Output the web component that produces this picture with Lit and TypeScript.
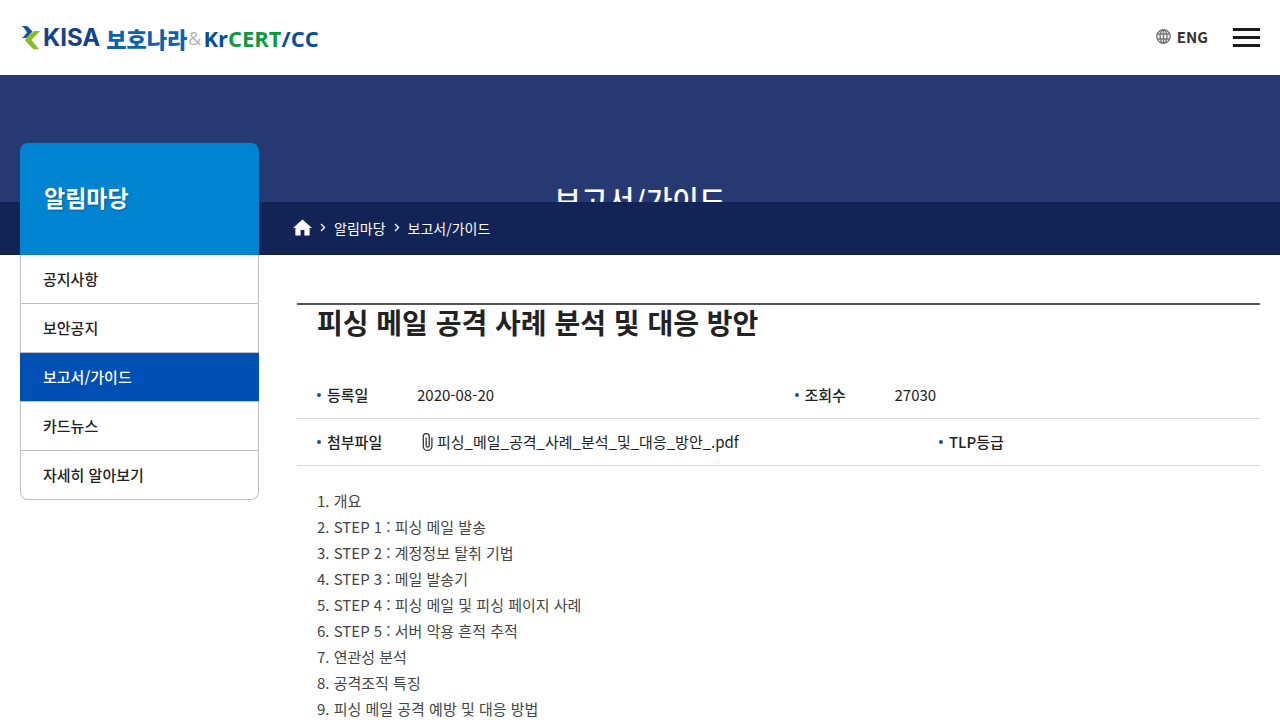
import { LitElement, html, css, svg } from "lit";
import { customElement, property } from "lit/decorators.js";

interface MenuItem {
  label: string;
  current?: boolean;
}

const MENU: MenuItem[] = [
  { label: "공지사항" },
  { label: "보안공지" },
  { label: "보고서/가이드", current: true },
  { label: "카드뉴스" },
  { label: "자세히 알아보기" },
];

const CONTENTS: string[] = [
  "1. 개요",
  "2. STEP 1 : 피싱 메일 발송",
  "3. STEP 2 : 계정정보 탈취 기법",
  "4. STEP 3 : 메일 발송기",
  "5. STEP 4 : 피싱 메일 및 피싱 페이지 사례",
  "6. STEP 5 : 서버 악용 흔적 추적",
  "7. 연관성 분석",
  "8. 공격조직 특징",
  "9. 피싱 메일 공격 예방 및 대응 방법",
];

const chevron = html`<svg class="chevron" viewBox="0 0 6 9" width="6" height="9" aria-hidden="true">
  ${svg`<path d="M1 1l3.5 3.5L1 8" fill="none" stroke="currentColor" stroke-width="1.4" />`}
</svg>`;

@customElement("site-header")
class SiteHeader extends LitElement {
  static styles = css`
    :host {
      display: flex;
      align-items: center;
      justify-content: space-between;
      height: 75px;
      padding: 0 20px;
      background: #fff;
    }
    .logo {
      display: flex;
      align-items: center;
      font: 700 22px/30px "Open Sans", "Noto Sans CJK KR", sans-serif;
      color: #0a4c9c;
      text-decoration: none;
    }
    .mark {
      margin-right: 2px;
    }
    .kisa {
      font-family: Inter, sans-serif;
      font-size: 24px;
      color: #14428a;
    }
    .bohonara {
      margin-left: 6px;
      font-family: "Noto Sans CJK KR", sans-serif;
      font-weight: 900;
      color: #0d62b0;
    }
    .amp {
      margin: 0 2px 0 1px;
      font-size: 18px;
      font-weight: 400;
      color: #b5b5b5;
    }
    .green {
      color: #0b9a3c;
    }
    .tools {
      display: flex;
      align-items: center;
      gap: 25px;
    }
    .lang {
      display: flex;
      align-items: center;
      gap: 6px;
      padding-bottom: 2px;
      color: #333;
      font-size: 15px;
      font-weight: 700;
      line-height: 24px;
      text-decoration: none;
    }
    .menu {
      display: flex;
      flex-direction: column;
      gap: 5px;
      width: 27px;
      padding: 0;
      border: 0;
      background: none;
      cursor: pointer;
    }
    .bar {
      height: 3px;
      background: #1c1c1c;
    }
  `;

  render() {
    return html`
      <a class="logo" href="#">
        <svg class="mark" viewBox="0 0 21 24" width="21" height="24" aria-hidden="true">
          <path d="M1 0h5q1.500 0 2.300.9L12.500 5.500 7.500 11q-.8.900-2 1H.5q2 0 3-1.200L7 6.500 4.500 2.500Q3.200.6 1 0z" fill="#17539c" />
          <path d="M20 5h-4.500q-1.500 0-2.500 1L6 12.500q-1.500 1.500 0 3l6 6.500q1 1.200 2.500 1.200H19l-7.500-9.200z" fill="#86bc25" />
        </svg>
        <span class="kisa">KISA</span>
        <span class="bohonara">보호나라</span>
        <span class="amp">&amp;</span>
        <span>Kr<span class="green">CERT</span>/CC</span>
      </a>
      <div class="tools">
        <a class="lang" href="#">
          <svg viewBox="0 0 15 15" width="15" height="15" fill="none" stroke="#777" stroke-width="1.400" aria-hidden="true">
            <circle cx="7.500" cy="7.500" r="6.700" />
            <ellipse cx="7.500" cy="7.500" rx="3.400" ry="6.700" />
            <path d="M7.500.7v13.600M1.500 5h12M1.500 10h12" />
          </svg>
          ENG
        </a>
        <button class="menu" type="button" aria-label="전체메뉴">
          <span class="bar"></span><span class="bar"></span><span class="bar"></span>
        </button>
      </div>
    `;
  }
}

@customElement("page-banner")
class PageBanner extends LitElement {
  static styles = css`
    :host {
      display: block;
      color: #fff;
    }
    .hero {
      height: 127px;
      overflow: hidden;
      background: #273972;
    }
    .title {
      margin: 0;
      padding-top: 102px;
      font-size: 29px;
      font-weight: 500;
      line-height: 44px;
      text-align: center;
    }
    .crumbs {
      display: flex;
      align-items: center;
      gap: 8px;
      height: 51px;
      padding: 0 20px 2px 293px;
      background: #122455;
      font-size: 14px;
      line-height: 24px;
    }
    .crumb {
      display: flex;
      color: inherit;
      text-decoration: none;
    }
    .chevron {
      flex: none;
    }
  `;

  @property() section = "";
  @property() heading = "";

  render() {
    return html`
      <div class="hero"><h1 class="title">${this.heading}</h1></div>
      <nav class="crumbs" aria-label="현재 위치">
        <a class="crumb" href="#" aria-label="홈">
          <svg viewBox="2 3 20 17" width="19" height="17" aria-hidden="true">
            <path d="M10 20v-6h4v6h5.500v-8H22L12 3 2 12h2.500v8z" fill="#fff" />
          </svg>
        </a>
        ${chevron}
        <a class="crumb" href="#">${this.section}</a>
        ${chevron}
        <a class="crumb" href="#">${this.heading}</a>
      </nav>
    `;
  }
}

@customElement("side-menu")
class SideMenu extends LitElement {
  static styles = css`
    :host {
      display: block;
    }
    .heading {
      margin: 0;
      padding: 0 24px 4px;
      border-radius: 8px 8px 0 0;
      background: #0084d1;
      color: #fff;
      font-size: 23px;
      font-weight: 700;
      line-height: 108px;
      text-shadow: 1px 1px 2px rgba(0, 0, 0, 0.3);
    }
    .list {
      margin: 0;
      padding: 0;
      list-style: none;
      border: 1px solid #bfc0c4;
      border-top: 0;
      border-radius: 0 0 8px 8px;
    }
    .item + .item {
      border-top: 1px solid #bfc0c4;
    }
    .link {
      display: block;
      padding: 0 22px;
      color: #222;
      font-size: 15px;
      font-weight: 500;
      line-height: 48px;
      text-decoration: none;
    }
    .link[aria-current] {
      margin: 0 -1px;
      padding: 0 23px;
      background: #004fb5;
      color: #fff;
    }
  `;

  @property() heading = "";
  @property({ attribute: false }) items: MenuItem[] = [];

  render() {
    return html`
      <h2 class="heading">${this.heading}</h2>
      <ul class="list">
        ${this.items.map(
          (item) => html`<li class="item">
            ${item.current
              ? html`<a class="link" href="#" aria-current="page">${item.label}</a>`
              : html`<a class="link" href="#">${item.label}</a>`}
          </li>`
        )}
      </ul>
    `;
  }
}

@customElement("report-detail")
class ReportDetail extends LitElement {
  static styles = css`
    :host {
      display: block;
      border-top: 2px solid #555;
      color: #222;
      font-size: 15px;
    }
    .title {
      margin: 0 20px 32px;
      font-size: 28px;
      font-weight: 700;
      line-height: 35px;
    }
    .row {
      display: flex;
      margin: 0;
      border-bottom: 1px solid #d5d5d5;
      line-height: 46px;
    }
    .field {
      display: flex;
      flex: 1;
      box-sizing: border-box;
      padding-left: 20px;
    }
    .half {
      flex: 0 0 calc(50% - 4px);
    }
    .wide {
      flex: 0 0 calc(65% - 4px);
    }
    .label {
      display: flex;
      align-items: center;
      gap: 6px;
      width: 100px;
      font-weight: 500;
    }
    .label::before {
      content: "";
      width: 4px;
      height: 4px;
      border-radius: 50%;
      background: #1552a5;
    }
    .value {
      margin: 0;
    }
    .file {
      display: flex;
      align-items: center;
      gap: 4px;
      padding-left: 5px;
      color: inherit;
      text-decoration: none;
    }
    .contents {
      margin: 22px 20px 0;
      padding: 0;
      list-style: none;
      color: #444;
      line-height: 26px;
    }
  `;

  render() {
    return html`
      <h2 class="title">피싱 메일 공격 사례 분석 및 대응 방안</h2>
      <dl class="row">
        <div class="field half">
          <dt class="label">등록일</dt>
          <dd class="value">2020-08-20</dd>
        </div>
        <div class="field">
          <dt class="label">조회수</dt>
          <dd class="value">27030</dd>
        </div>
      </dl>
      <dl class="row">
        <div class="field wide">
          <dt class="label">첨부파일</dt>
          <dd class="value">
            <a class="file" href="#">
              <svg viewBox="0 0 12 20" width="11" height="20" fill="none" stroke="#333" stroke-width="1.400" aria-hidden="true">
                <path d="M10.800 5v9.500a4.700 4.700 0 0 1-9.400 0V4.200a3.200 3.200 0 0 1 6.500 0v9.600a1.700 1.700 0 0 1-3.400 0V5" />
              </svg>
              피싱_메일_공격_사례_분석_및_대응_방안_.pdf
            </a>
          </dd>
        </div>
        <div class="field">
          <dt class="label">TLP등급</dt>
          <dd class="value"></dd>
        </div>
      </dl>
      <ul class="contents">
        ${CONTENTS.map((line) => html`<li>${line}</li>`)}
      </ul>
    `;
  }
}

@customElement("app-root")
class AppRoot extends LitElement {
  static styles = css`
    :host {
      display: block;
      height: 100vh;
      overflow: hidden;
      background: #fff;
      font-family: "Noto Sans CJK KR", sans-serif;
    }
    .body {
      display: flex;
      align-items: flex-start;
      gap: 38px;
      padding: 0 20px;
    }
    .side {
      flex: 0 0 239px;
      margin-top: -112px;
    }
    .detail {
      flex: 1;
      margin-top: 48px;
    }
  `;

  render() {
    return html`
      <site-header></site-header>
      <page-banner section="알림마당" heading="보고서/가이드"></page-banner>
      <main class="body" lang="ko">
        <side-menu class="side" heading="알림마당" .items=${MENU}></side-menu>
        <report-detail class="detail"></report-detail>
      </main>
    `;
  }
}
